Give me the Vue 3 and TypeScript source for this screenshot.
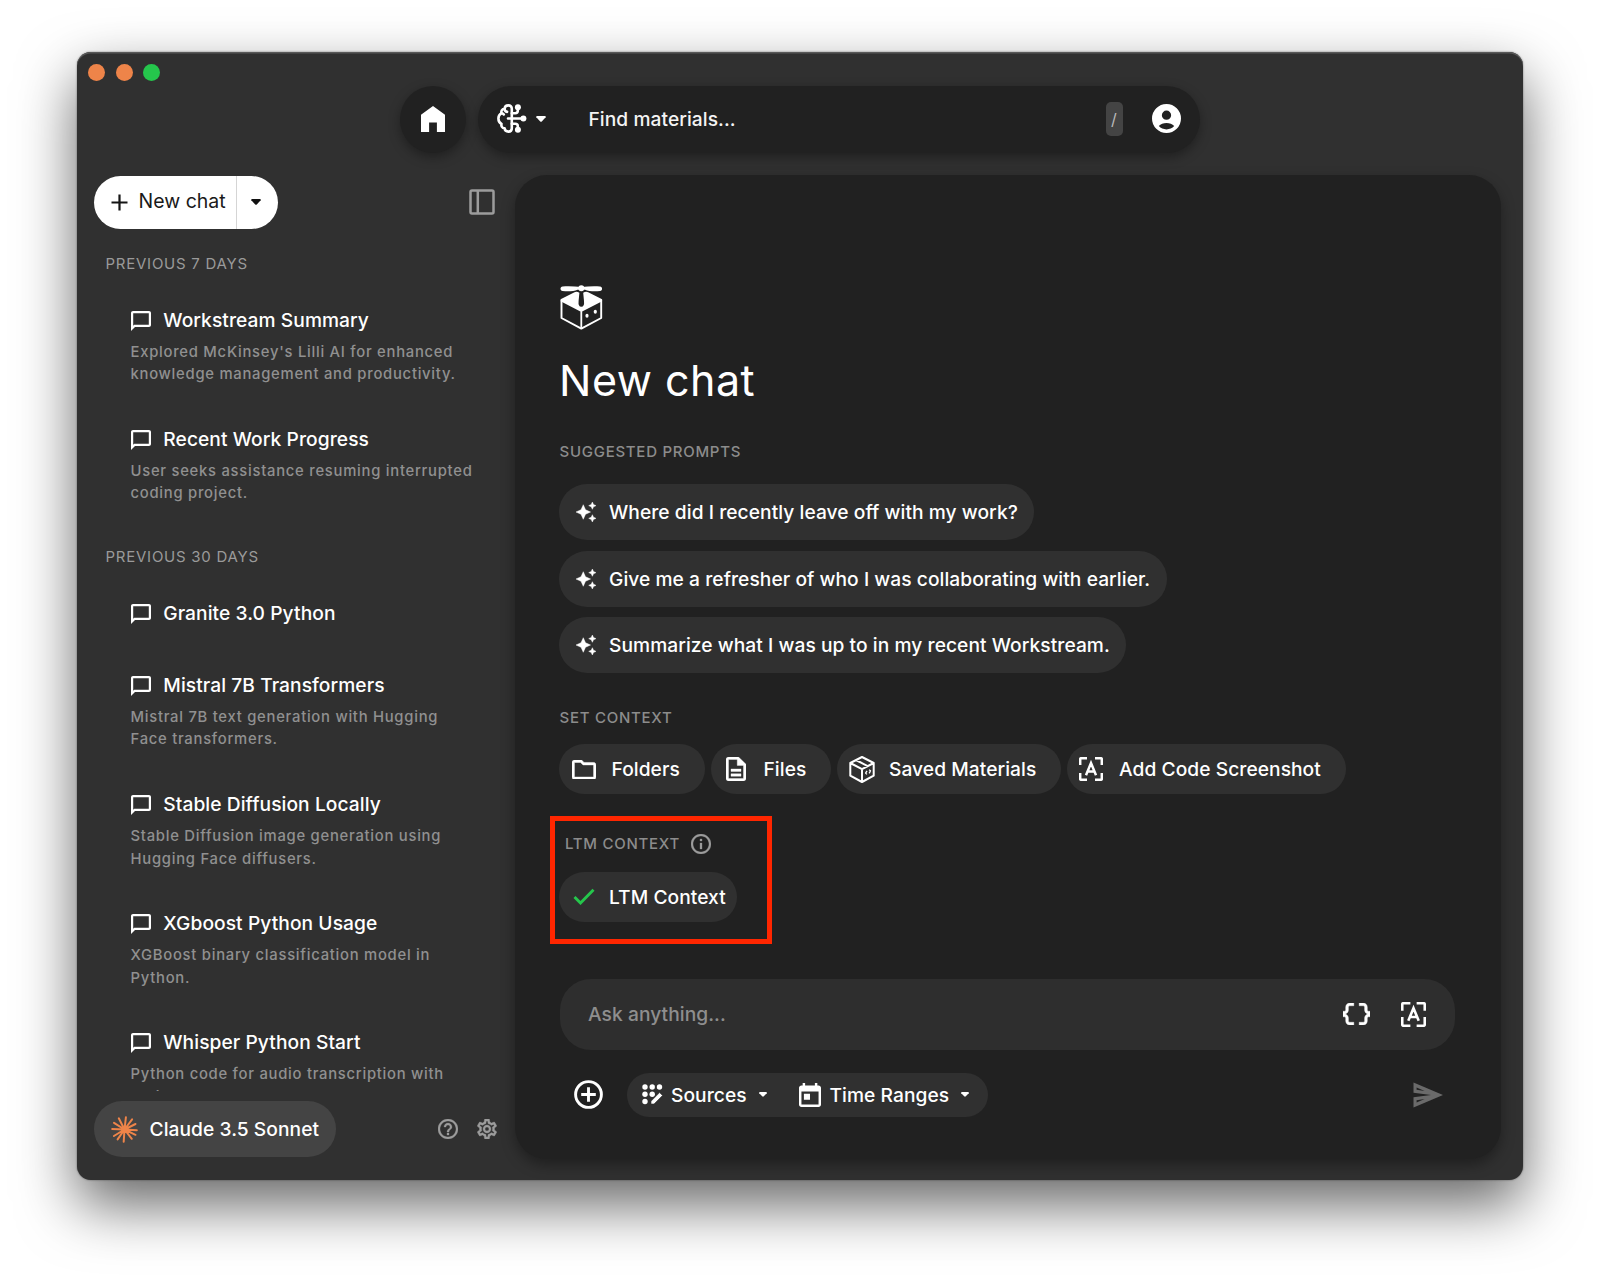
<script setup lang="ts">
interface Chat {
  title: string
  lines?: string[]
}
interface Group {
  label: string
  chats: Chat[]
}

const groups: Group[] = [
  {
    label: 'PREVIOUS 7 DAYS',
    chats: [
      { title: 'Workstream Summary', lines: ["Explored McKinsey's Lilli AI for enhanced", 'knowledge management and productivity.'] },
      { title: 'Recent Work Progress', lines: ['User seeks assistance resuming interrupted', 'coding project.'] },
    ],
  },
  {
    label: 'PREVIOUS 30 DAYS',
    chats: [
      { title: 'Granite 3.0 Python' },
      { title: 'Mistral 7B Transformers', lines: ['Mistral 7B text generation with Hugging', 'Face transformers.'] },
      { title: 'Stable Diffusion Locally', lines: ['Stable Diffusion image generation using', 'Hugging Face diffusers.'] },
      { title: 'XGboost Python Usage', lines: ['XGBoost binary classification model in', 'Python.'] },
      { title: 'Whisper Python Start', lines: ['Python code for audio transcription with', 'Whisper.'] },
    ],
  },
]

const prompts: string[] = [
  'Where did I recently leave off with my work?',
  'Give me a refresher of who I was collaborating with earlier.',
  'Summarize what I was up to in my recent Workstream.',
]
</script>

<template>
  <div class="window">
    <header class="topbar">
      <div class="lights"><i></i><i></i><i class="green"></i></div>
      <button class="home" aria-label="Home">
        <svg width="24" height="26" viewBox="4 3 16 18" preserveAspectRatio="none"><path d="M4 21V9l8-6 8 6v12h-5.400v-6.600H9.400V21z" fill="#fff" /></svg>
      </button>
      <div class="search">
        <svg class="brain" width="30" height="29" viewBox="0 0 30 29" fill="none" stroke="#fff" stroke-width="2.600" stroke-linecap="round" stroke-linejoin="round">
          <path d="M14.800 14.500V4.800C14.800 2.600 13.300 1.400 11.400 1.400 9.300 1.400 7.800 2.700 7.600 4.600 5.200 4.900 3.900 6.900 4.500 9.100 2.400 10.200 1.400 12.200 1.400 14.500s1 4.300 3.100 5.400C3.900 22.100 5.200 24.100 7.600 24.400c.2 1.900 1.700 3.200 3.800 3.200 1.900 0 3.400-1.200 3.400-3.400V14.500" />
          <path d="M7.600 4.800c0 1.700.9 2.900 2.500 3.100M4.600 9.300c1 .1 1.700.5 2.200 1.200M11 14.500h15M14.800 9.200h3.400c1.600 0 2.600-.8 2.600-2.400V4M14.800 19.800h3.400c1.600 0 2.600.8 2.600 2.400V25" />
          <g fill="#fff" stroke="none"><circle cx="20.900" cy="3.300" r="3" /><circle cx="26.400" cy="14.500" r="3" /><circle cx="20.900" cy="25.700" r="3" /></g>
        </svg>
        <svg class="caret c1" width="10" height="6" viewBox="0 0 10 6"><path d="M1 0h8q1 .2.700 1.300L6 5.300q-1 1-2 0L.300 1.300Q0 .200 1 0z" fill="#fff" /></svg>
        <span class="ph">Find materials...</span>
        <kbd>/</kbd>
        <svg class="avatar" width="29" height="29" viewBox="2 2 20 20"><path fill="#fff" fill-rule="evenodd" d="M12 2a10 10 0 1 0 0 20 10 10 0 0 0 0-20zm0 4.500a3.200 3.200 0 1 1 0 6.400 3.200 3.200 0 0 1 0-6.400zM6.700 17.200c1.200-1.400 3.200-2.100 5.300-2.100s4.100.7 5.300 2.100c-1.300 1.500-3.200 2.300-5.300 2.300s-4-.8-5.300-2.300z" /></svg>
      </div>
    </header>

    <div class="body">
      <aside class="sidebar">
        <div class="side-top">
          <div class="newchat">
            <span class="nc-main">
              <svg width="17" height="17" viewBox="0 0 17 17"><path d="M8.500 0.500v16M.500 8.500h16" stroke="#151515" stroke-width="2.200" /></svg>
              <span>New chat</span>
            </span>
            <span class="nc-drop"><svg width="10" height="6" viewBox="0 0 10 6"><path d="M1 0h8q1 .2.700 1.300L6 5.300q-1 1-2 0L.300 1.300Q0 .200 1 0z" fill="#111" /></svg></span>
          </div>
          <svg class="toggle" width="26" height="26" viewBox="0 0 26 26" fill="none" stroke="#9c9c9c" stroke-width="2.500"><rect x="1.500" y="1.500" width="23" height="23" rx="1.500" /><path d="M8.800 1.500v23" /></svg>
        </div>
        <div class="list">
          <section v-for="g in groups" :key="g.label">
            <h3 class="label">{{ g.label }}</h3>
            <div v-for="c in g.chats" :key="c.title" class="chat">
              <div class="title">
                <svg width="20" height="20" viewBox="2 2 20 20"><path fill="#fff" d="M20 2H4c-1.100 0-2 .9-2 2v18l4-4h14c1.100 0 2-.9 2-2V4c0-1.100-.9-2-2-2zm-.200 13.800H5.200L4.200 16.800V4.200h15.600v11.600z" /></svg>
                <span>{{ c.title }}</span>
              </div>
              <p v-if="c.lines" class="desc"><span v-for="l in c.lines" :key="l">{{ l }}</span></p>
            </div>
          </section>
        </div>
        <footer class="side-foot">
          <div class="model">
            <svg width="27" height="27" viewBox="-13.500 -13.500 27 27" stroke="#ee8449" stroke-linecap="round">
              <path d="M0 0L-5.700-11.200M0 0L1.400-12.200M0 0L7.600-10.100M0 0L11-5.500M0 0L12.300.7M0 0L11 5.300M0 0L7.300 9.300M0 0L-.800 12.300M0 0L-6.900 9.900M0 0L-10.600 6.500M0 0L-12.300-.500M0 0L-10.500-6.600" stroke-width="2" />
              <circle r="3.400" stroke="none" fill="#ee8449" />
            </svg>
            <span>Claude 3.5 Sonnet</span>
          </div>
          <svg class="help" width="20" height="20" viewBox="2 2 20 20"><path fill="#9c9c9c" stroke="#9c9c9c" stroke-width=".3" d="M11 18h2v-2h-2v2zm1-16C6.480 2 2 6.480 2 12s4.480 10 10 10 10-4.480 10-10S17.520 2 12 2zm0 18c-4.410 0-8-3.590-8-8s3.590-8 8-8 8 3.590 8 8-3.590 8-8 8zm0-14c-2.210 0-4 1.790-4 4h2c0-1.100.9-2 2-2s2 .9 2 2c0 2-3 1.750-3 5h2c0-2.250 3-2.500 3-5 0-2.210-1.790-4-4-4z" /></svg>
          <svg class="gear" width="20" height="20" viewBox="2 2 20 20"><path fill="#9c9c9c" stroke="#9c9c9c" stroke-width=".4" d="M19.430 12.980c.04-.32.07-.64.07-.98 0-.34-.03-.66-.07-.98l2.110-1.650c.19-.15.24-.42.12-.64l-2-3.460c-.09-.16-.26-.25-.44-.25-.06 0-.12.01-.17.03l-2.490 1c-.52-.4-1.080-.73-1.690-.98l-.38-2.650C14.460 2.180 14.250 2 14 2h-4c-.25 0-.46.18-.49.42l-.38 2.650c-.61.25-1.170.59-1.690.98l-2.490-1c-.06-.02-.12-.03-.18-.03-.17 0-.34.09-.43.25l-2 3.460c-.13.22-.07.49.12.64l2.110 1.650c-.04.32-.07.65-.07.98 0 .33.03.66.07.98l-2.110 1.650c-.19.15-.24.42-.12.64l2 3.460c.09.16.26.25.44.25.06 0 .12-.01.17-.03l2.490-1c.52.4 1.080.73 1.690.98l.38 2.650c.03.24.24.42.49.42h4c.25 0 .46-.18.49-.42l.38-2.650c.61-.25 1.170-.59 1.690-.98l2.490 1c.06.02.12.03.18.03.17 0 .34-.09.43-.25l2-3.460c.12-.22.07-.49-.12-.64l-2.110-1.650zm-1.980-1.710c.04.31.05.52.05.73 0 .21-.02.43-.05.73l-.14 1.130.89.7 1.080.84-.7 1.210-1.270-.51-1.040-.42-.9.68c-.43.32-.84.56-1.250.73l-1.060.43-.16 1.130-.2 1.350h-1.400l-.19-1.350-.16-1.130-1.060-.43c-.43-.18-.83-.41-1.230-.71l-.91-.7-1.060.43-1.270.51-.7-1.210 1.080-.84.89-.7-.14-1.130c-.03-.31-.05-.54-.05-.74s.02-.43.05-.73l.14-1.130-.89-.7-1.080-.84.7-1.210 1.270.51 1.040.42.9-.68c.43-.32.84-.56 1.250-.73l1.060-.43.16-1.130.2-1.350h1.390l.19 1.350.16 1.130 1.060.43c.43.18.83.41 1.230.71l.91.7 1.060-.43 1.270-.51.7 1.210-1.070.85-.89.7.14 1.130zM12 8c-2.210 0-4 1.790-4 4s1.790 4 4 4 4-1.790 4-4-1.790-4-4-4zm0 6c-1.100 0-2-.9-2-2s.9-2 2-2 2 .9 2 2-.9 2-2 2z" /></svg>
        </footer>
      </aside>

      <main class="panel">
        <svg class="logo" width="43" height="45" viewBox="0 0 43 45">
          <path d="M1.500 15.200V33L21.300 43.600 41.200 33V15.200" fill="none" stroke="#fff" stroke-width="1.900" stroke-linejoin="round" />
          <path d="M.600 14.200L14.500 7.200Q17 6.300 19.400 7.800L18.600 16Q18 21.800 21.300 21.800T24 16L23.200 7.800Q25.500 6.300 28.200 7.200L42.100 14.200V16.300L22.200 26.600V43.500H20.400V26.600L.600 16.300z" fill="#fff" />
          <path d="M21.300 2C15 1.200 8 1 2.600 1.400-.200 1.800-.200 5.400 2.600 6 8 6.600 14 6.300 17.500 4.800L21.300 4.500l3.800.3c3.500 1.500 9.500 1.800 14.900 1.200 2.800-.6 2.800-4.200 0-4.600C34.600 1 27.600 1.200 21.300 2z" fill="#fff" />
          <circle cx="21.300" cy="3.200" r="3" fill="#fff" />
          <ellipse cx="27" cy="30.700" rx="1.600" ry="2" fill="#fff" /><ellipse cx="35.300" cy="26.800" rx="1.600" ry="2" fill="#fff" />
        </svg>
        <h1>New chat</h1>
        <h3 class="label l-prompts">SUGGESTED PROMPTS</h3>
        <div class="prompts">
          <div v-for="p in prompts" :key="p" class="prompt">
            <svg width="20" height="20" viewBox="1 1 22 22"><path fill="#fff" stroke="#fff" stroke-width=".5" d="M19 9l1.250-2.750L23 5l-2.750-1.250L19 1l-1.250 2.750L15 5l2.750 1.250L19 9zm-7.500.5L9 4 6.500 9.500 1 12l5.500 2.500L9 20l2.500-5.500L17 12l-5.500-2.500zM19 15l-1.250 2.750L15 19l2.750 1.250L19 23l1.250-2.750L23 19l-2.750-1.250L19 15z" /></svg>
            <span>{{ p }}</span>
          </div>
        </div>
        <h3 class="label l-context">SET CONTEXT</h3>
        <div class="chips">
          <div class="chip w1">
            <svg width="24" height="19.500" viewBox="2 4 20 16" preserveAspectRatio="none"><path fill="#fff" stroke="#fff" stroke-width=".4" d="M9.170 6l2 2H20v10H4V6h5.170M10 4H4c-1.100 0-1.990.9-1.990 2L2 18c0 1.100.9 2 2 2h16c1.100 0 2-.9 2-2V8c0-1.100-.9-2-2-2h-8l-2-2z" /></svg>
            <span>Folders</span>
          </div>
          <div class="chip w2">
            <svg width="20" height="24" viewBox="4 2 16 20" preserveAspectRatio="none"><path fill="#fff" stroke="#fff" stroke-width=".3" d="M8 16h8v2H8zm0-4h8v2H8zm6-10H6c-1.100 0-2 .9-2 2v16c0 1.100.89 2 1.990 2H18c1.100 0 2-.9 2-2V8l-6-6zm4 18H6V4h7v5h5v11z" /></svg>
            <span>Files</span>
          </div>
          <div class="chip w3">
            <svg width="26" height="27" viewBox="0 0 26 27" fill="none" stroke="#fff" stroke-width="2" stroke-linejoin="round"><path d="M13 1L24.700 7v12.700L13 26 1.300 19.700V7zM1.300 7L13 13.200 24.700 7M13 13.200V26M7 4L18.700 10.200" /><path d="M18 14.800l-1.400 2.300 1.300 1.300M20.100 13.700l1.400 1-1.300 2.700" stroke-width="1.300" /></svg>
            <span>Saved Materials</span>
          </div>
          <div class="chip w4">
            <svg width="24" height="24" viewBox="0 0 24 24" fill="none" stroke="#fff" stroke-width="2.500"><path d="M1.200 8V2.200q0-1 1-1H8M16 1.200h5.800q1 0 1 1V8M22.800 16v5.800q0 1-1 1H16M8 22.800H2.200q-1 0-1-1V16M7 18.300L12 6 17 18.300M8.800 14.600h6.400" /></svg>
            <span>Add Code Screenshot</span>
          </div>
        </div>

        <div class="ltm">
          <div class="ltm-head">
            <h3 class="label">LTM CONTEXT</h3>
            <svg width="20" height="20" viewBox="2 2 20 20"><path fill="#9c9c9c" stroke="#9c9c9c" stroke-width=".3" d="M11 7h2v2h-2zm0 4h2v6h-2zm1-9C6.480 2 2 6.480 2 12s4.480 10 10 10 10-4.480 10-10S17.520 2 12 2zm0 18c-4.410 0-8-3.590-8-8s3.590-8 8-8 8 3.590 8 8-3.590 8-8 8z" /></svg>
          </div>
          <div class="chip w5">
            <svg width="22" height="17" viewBox="0 0 22 17"><path d="M1.500 9l6 6L20.500 1.800" fill="none" stroke="#25c64c" stroke-width="2.900" /></svg>
            <span>LTM Context</span>
          </div>
        </div>

        <div class="ask">
          <span>Ask anything...</span>
          <svg class="braces" width="27" height="22" viewBox="2 4 20 16" preserveAspectRatio="none"><path fill="#fff" stroke="#fff" stroke-width=".3" d="M4 7v2c0 .55-.45 1-1 1H2v4h1c.55 0 1 .45 1 1v2c0 1.650 1.350 3 3 3h3v-2H7c-.55 0-1-.45-1-1v-2c0-1.300-.84-2.420-2-2.830v-.34C5.160 11.420 6 10.300 6 9V7c0-.55.45-1 1-1h3V4H7C5.350 4 4 5.350 4 7zM21 10c-.55 0-1-.45-1-1V7c0-1.650-1.350-3-3-3h-3v2h3c.55 0 1 .45 1 1v2c0 1.300.84 2.420 2 2.830v.34c-1.160.41-2 1.520-2 2.830v2c0 .55-.45 1-1 1h-3v2h3c1.650 0 3-1.350 3-3v-2c0-.55.45-1 1-1h1v-4h-1z" /></svg>
          <svg class="scan" width="25" height="25" viewBox="0 0 24 24" fill="none" stroke="#fff" stroke-width="2.500"><path d="M1.200 8.500V2.200q0-1 1-1H9M15 1.200h6.800q1 0 1 1V8.500M22.800 14.500v7.300q0 1-1 1H15M9 22.800H2.200q-1 0-1-1V14.500M7 18L12 6 17 18M8.600 14.400h6.800" /></svg>
        </div>

        <div class="tools">
          <svg class="add" width="29" height="29" viewBox="0 0 29 29" fill="none" stroke="#fff" stroke-width="2.900"><circle cx="14.500" cy="14.500" r="12.900" /><path d="M14.500 7.200v14.600M7.200 14.500h14.600" /></svg>
          <div class="filters">
            <svg class="grid" width="21" height="21" viewBox="0 0 21 21"><g fill="#fff"><circle cx="3" cy="3" r="2.700" /><circle cx="10.200" cy="3" r="2.700" /><circle cx="17.500" cy="3" r="2.700" /><circle cx="3" cy="10.200" r="2.700" /><circle cx="3" cy="17.500" r="2.700" /><circle cx="10.200" cy="10.200" r="2.700" /><path d="M9 20v-2.800L17.600 8.600l2.900 2.900L12 20z" stroke="#303030" stroke-width=".6" /></g></svg>
            <span class="src">Sources</span>
            <svg class="c2" width="8" height="5" viewBox="0 0 10 6"><path d="M1 0h8q1 .2.700 1.300L6 5.300q-1 1-2 0L.300 1.300Q0 .200 1 0z" fill="#fff" /></svg>
            <svg class="cal" width="22" height="24" viewBox="3 1 18 20" preserveAspectRatio="none"><path fill="#fff" d="M19 3h-1V1h-2v2H8V1H6v2H5c-1.110 0-1.990.9-1.990 2L3 19c0 1.100.89 2 2 2h14c1.100 0 2-.9 2-2V5c0-1.100-.9-2-2-2zm0 16H5V8h14v11zM7 10h5v5H7z" /></svg>
            <span class="time">Time Ranges</span>
            <svg class="c2" width="8" height="5" viewBox="0 0 10 6"><path d="M1 0h8q1 .2.700 1.300L6 5.300q-1 1-2 0L.300 1.300Q0 .200 1 0z" fill="#fff" /></svg>
          </div>
          <svg class="send" width="30" height="26" viewBox="0 0 30 26"><path fill="#6a6a6a" fill-rule="evenodd" d="M.500.500L30 13 .500 25.500V15.200L18 13 .500 10.800zM3.600 5.600V7.700l8 1.200zM3.600 20.400V18.300l8-1.200z" /></svg>
        </div>
      </main>
    </div>
  </div>
</template>

<style>
body {
  margin: 0;
  background: #fff;
}
#app {
  height: 1282px;
  overflow: hidden;
  display: flow-root;
}
</style>

<style scoped>
* {
  box-sizing: border-box;
}
svg {
  display: block;
  flex: none;
}
h1, h3, p {
  margin: 0;
  font-weight: 400;
}
.window {
  width: 1446px;
  height: 1128px;
  margin: 52px 0 0 77px;
  border-radius: 14px;
  background: #303030;
  box-shadow: 0 25px 58px rgba(0, 0, 0, 0.6), 0 0 2px rgba(0, 0, 0, 0.5), inset 0 1.500px 0 #585858;
  font-family: Inter, "Liberation Sans", sans-serif;
  font-size: 19.200px;
  font-weight: 500;
  letter-spacing: 0.055px;
  color: #fff;
  white-space: nowrap;
}
.topbar {
  display: flex;
  height: 122.500px;
}
.lights {
  display: flex;
  gap: 10.500px;
  width: 323px;
  padding: 11.500px 0 0 11.300px;
}
.lights i {
  width: 17px;
  height: 17px;
  border-radius: 50%;
  background: #ee8449;
}
.lights .green {
  background: #25c64c;
}
.home {
  display: flex;
  align-items: center;
  justify-content: center;
  width: 66px;
  height: 67px;
  margin: 34px 11.500px 0 0;
  padding: 0 0 2px;
  border: 0;
  border-radius: 50%;
  background: #212121;
  box-shadow: 0 4px 12px rgba(0, 0, 0, 0.35);
}
.search {
  display: flex;
  align-items: center;
  width: 722.500px;
  height: 67px;
  margin-top: 34px;
  padding: 0 0 2px 19px;
  border-radius: 34px;
  background: #212121;
  box-shadow: 0 4px 12px rgba(0, 0, 0, 0.35);
}
.c1 {
  margin-left: 9px;
}
.ph {
  width: 517px;
  margin-left: 43px;
  color: #f4f4f4;
}
kbd {
  width: 17px;
  height: 34px;
  border-radius: 5px;
  background: #444;
  color: #bbb;
  font: 400 16px/35px Inter, sans-serif;
  text-align: center;
}
.avatar {
  margin-left: 29.500px;
}
.body {
  display: flex;
  height: 1005.500px;
}
.sidebar {
  display: flex;
  flex-direction: column;
  width: 438px;
}
.side-top {
  display: flex;
  align-items: flex-start;
  height: 76.500px;
  padding: 1px 0 0 17px;
}
.newchat {
  display: flex;
  width: 184px;
  height: 53px;
  border-radius: 27px;
  background: #fff;
  color: #1a1a1a;
  font-size: 19.500px;
  font-weight: 400;
  letter-spacing: 0;
}
.nc-main {
  display: flex;
  align-items: center;
  gap: 10.500px;
  width: 143px;
  padding-left: 17px;
  border-right: 1px solid #d5d5d5;
}
.nc-main span {
  margin-top: -2px;
}
.nc-drop {
  display: flex;
  align-items: center;
  flex: 1;
  padding-left: 14px;
}
.toggle {
  margin: 13.500px 0 0 190.500px;
}
.list {
  height: 839.500px;
  overflow: hidden;
  padding-left: 28.500px;
}
.label {
  height: 24px;
  line-height: 24px;
  font-size: 15px;
  letter-spacing: 0.750px;
  color: #9a9a9a;
}
.list .label {
  margin-top: 0.800px;
  margin-bottom: 30.200px;
}
.chat {
  min-height: 72px;
  padding: 0 0 39.600px 25px;
}
.title {
  display: flex;
  align-items: center;
  height: 28px;
  gap: 12.800px;
  letter-spacing: 0.070px;
}
.title svg {
  margin-top: 2px;
}
.desc {
  margin-top: 7px;
}
.desc span {
  display: block;
  height: 22.250px;
  line-height: 22.250px;
  font-size: 14.800px;
  font-weight: 500;
  letter-spacing: 0.740px;
  color: #909090;
}
.side-foot {
  display: flex;
  align-items: center;
  height: 56px;
  margin-top: 10.500px;
  padding-left: 17px;
}
.model {
  display: flex;
  align-items: center;
  gap: 11.500px;
  width: 242px;
  height: 56px;
  padding-left: 17px;
  border-radius: 28px;
  background: #444;
}
.help {
  margin-left: 102.300px;
}
.gear {
  margin-left: 18.700px;
}
.panel {
  display: flex;
  flex-direction: column;
  width: 986px;
  height: 984px;
  padding-left: 44px;
  border-radius: 32px;
  background: #212121;
  box-shadow: 0 6px 14px rgba(0, 0, 0, 0.35);
}
.logo {
  margin: 110.500px 0 0 1px;
}
h1 {
  margin-top: 24.400px;
  height: 52px;
  line-height: 52px;
  font-size: 43px;
  letter-spacing: 0.500px;
}
.panel .label {
  height: 20px;
  line-height: 20px;
  padding-left: 0.500px;
  color: #8c8c8c;
  font-weight: 500;
  letter-spacing: 0.730px;
}
.l-prompts {
  margin: 35.600px 0 22.500px;
}
.prompts {
  display: flex;
  flex-direction: column;
  align-items: flex-start;
  gap: 10.700px;
}
.prompt {
  display: flex;
  align-items: center;
  gap: 13px;
  height: 55.700px;
  padding: 0 16.500px 0 17px;
  border-radius: 28px;
  background: #303030;
}
.l-context {
  margin: 34.900px 0 16.500px;
}
.chips {
  display: flex;
  gap: 6px;
}
.chip {
  display: flex;
  align-items: center;
  height: 50px;
  border-radius: 25px;
  background: #303030;
}
.w1 { width: 146px; padding-left: 13px; gap: 15.500px; }
.w2 { width: 119.500px; padding-left: 15px; gap: 17.500px; }
.w3 { width: 224px; padding-left: 12px; gap: 14.500px; }
.w4 { width: 279.500px; padding-left: 12.500px; gap: 16px; }
.w5 { width: 178px; padding-left: 14px; gap: 14px; }
.ltm {
  position: relative;
  margin-top: 39.900px;
}
.ltm::before {
  content: "";
  position: absolute;
  left: -9px;
  top: -18px;
  box-sizing: border-box;
  width: 222px;
  height: 128px;
  border: 5px solid #ff2600;
}
.ltm-head {
  display: flex;
  align-items: center;
  height: 20px;
  margin-bottom: 17.500px;
}
.ltm-head .label {
  width: 126px;
  margin-left: 5.500px;
}
.ltm-head svg {
  margin-left: 0.800px;
}
.ask {
  display: flex;
  align-items: center;
  width: 894.500px;
  height: 71.500px;
  margin: 57px 0 0 1px;
  padding-left: 28px;
  border-radius: 31px;
  background: #2e2e2e;
  color: #8e8e8e;
}
.ask span {
  width: 755px;
}
.scan {
  margin-left: 31px;
}
.tools {
  display: flex;
  align-items: center;
  height: 43.500px;
  margin-top: 23px;
  padding-left: 14.500px;
}
.filters {
  display: flex;
  align-items: center;
  width: 361px;
  height: 43.500px;
  margin-left: 24.500px;
  padding-left: 15px;
  border-radius: 22px;
  background: #303030;
}
.grid {
  margin-right: 8px;
}
.src {
  width: 75.500px;
}
.time {
  width: 119px;
}
.c2 {
  margin-left: 12.500px;
}
.cal {
  margin: 0 9px 0 31.500px;
}
.send {
  margin-left: 424.500px;
}
</style>
